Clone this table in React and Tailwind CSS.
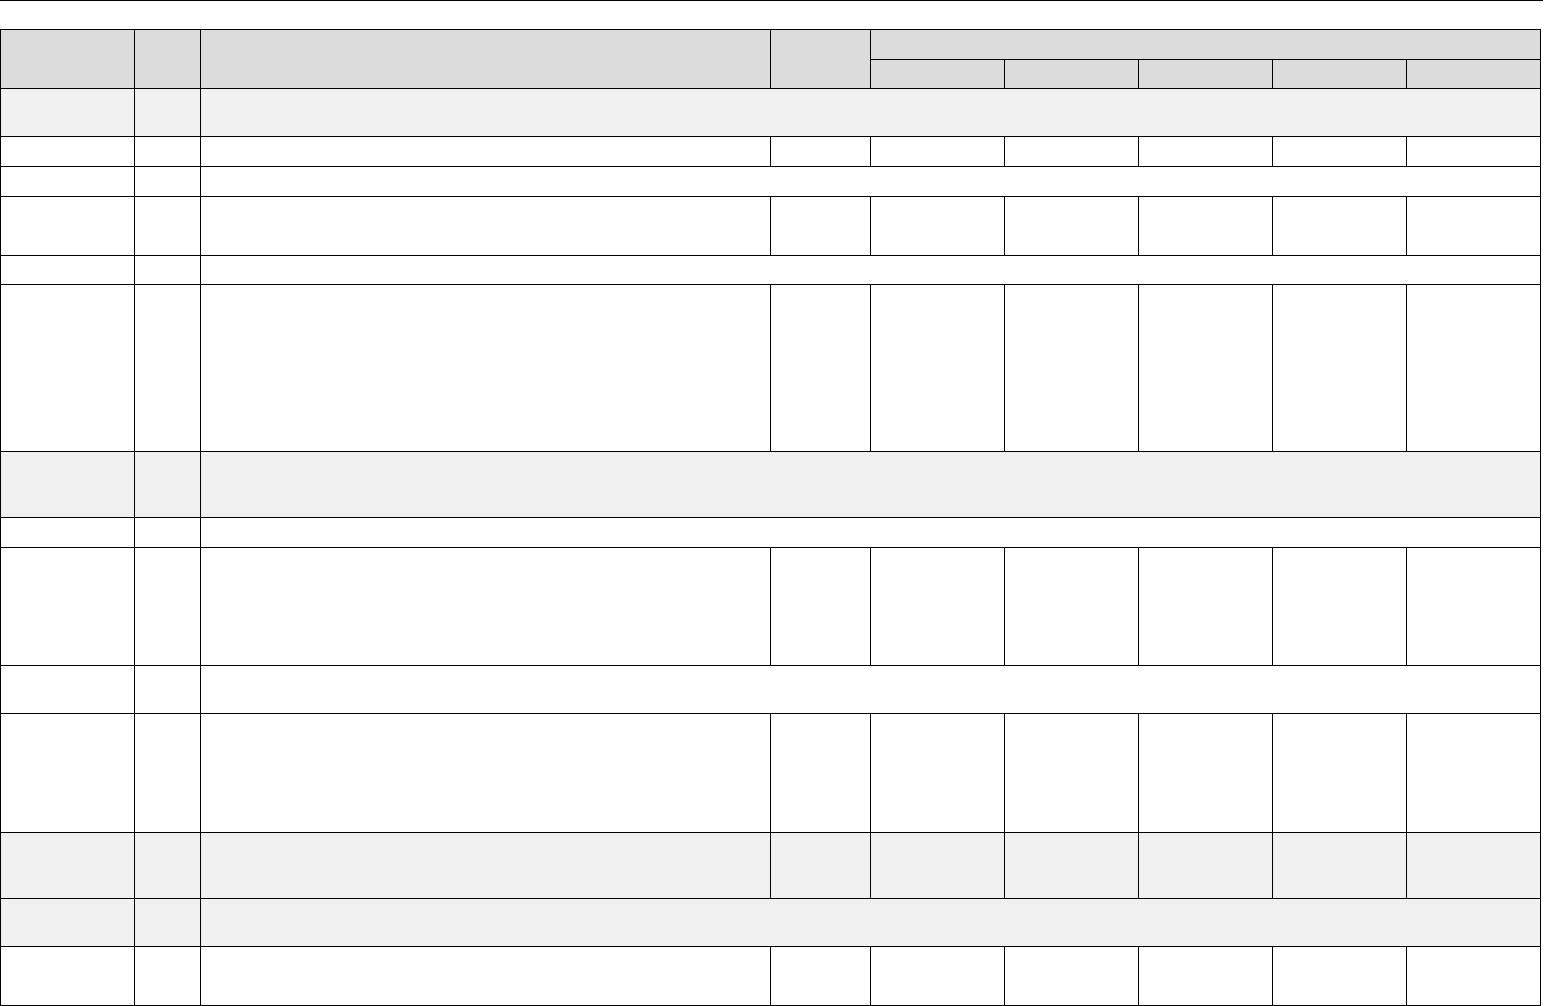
import React from 'react';

const cols = 'grid-cols-[134px_66px_570px_100px_134px_134px_134px_134px_134px]';
const cell = 'border-r border-b border-black';

// type: 'full' = every column, 'span' = two cells and one wide cell
const rows = [
  { h: 'h-[48px]', type: 'span', bg: 'bg-[#f0f0f0]' },
  { h: 'h-[30px]', type: 'full', bg: 'bg-white' },
  { h: 'h-[30px]', type: 'span', bg: 'bg-white' },
  { h: 'h-[59px]', type: 'full', bg: 'bg-white' },
  { h: 'h-[29px]', type: 'span', bg: 'bg-white' },
  { h: 'h-[167px]', type: 'full', bg: 'bg-white' },
  { h: 'h-[66px]', type: 'span', bg: 'bg-[#f0f0f0]' },
  { h: 'h-[30px]', type: 'span', bg: 'bg-white' },
  { h: 'h-[118px]', type: 'full', bg: 'bg-white' },
  { h: 'h-[48px]', type: 'span', bg: 'bg-white' },
  { h: 'h-[119px]', type: 'full', bg: 'bg-white' },
  { h: 'h-[66px]', type: 'full', bg: 'bg-[#f0f0f0]' },
  { h: 'h-[48px]', type: 'span', bg: 'bg-[#f0f0f0]' },
  { h: 'h-[59px]', type: 'full', bg: 'bg-white' },
];

function Row({ h, type, bg }) {
  if (type === 'span') {
    return (
      <div className={`grid ${cols} ${h} ${bg}`}>
        <div className={cell} />
        <div className={cell} />
        <div className={`${cell} col-span-7`} />
      </div>
    );
  }
  return (
    <div className={`grid ${cols} ${h} ${bg}`}>
      {Array.from({ length: 9 }).map((_, i) => (
        <div key={i} className={cell} />
      ))}
    </div>
  );
}

export default function App() {
  return (
    <div className="w-[1544px] h-[1006px] bg-white overflow-hidden font-['Liberation_Sans',sans-serif]">
      <div className="w-[1543px] h-px bg-black" />

      <div className="mt-[28px] w-[1541px] border-l border-t border-black">
        {/* Header */}
        <div className={`grid ${cols} grid-rows-[30px_29px] bg-[#dcdcdc]`}>
          <div className={`${cell} row-span-2`} />
          <div className={`${cell} row-span-2`} />
          <div className={`${cell} row-span-2`} />
          <div className={`${cell} row-span-2`} />
          <div className={`${cell} col-span-5`} />
          <div className={cell} />
          <div className={cell} />
          <div className={cell} />
          <div className={cell} />
          <div className={cell} />
        </div>

        {rows.map((r, i) => (
          <Row key={i} {...r} />
        ))}
      </div>
    </div>
  );
}
